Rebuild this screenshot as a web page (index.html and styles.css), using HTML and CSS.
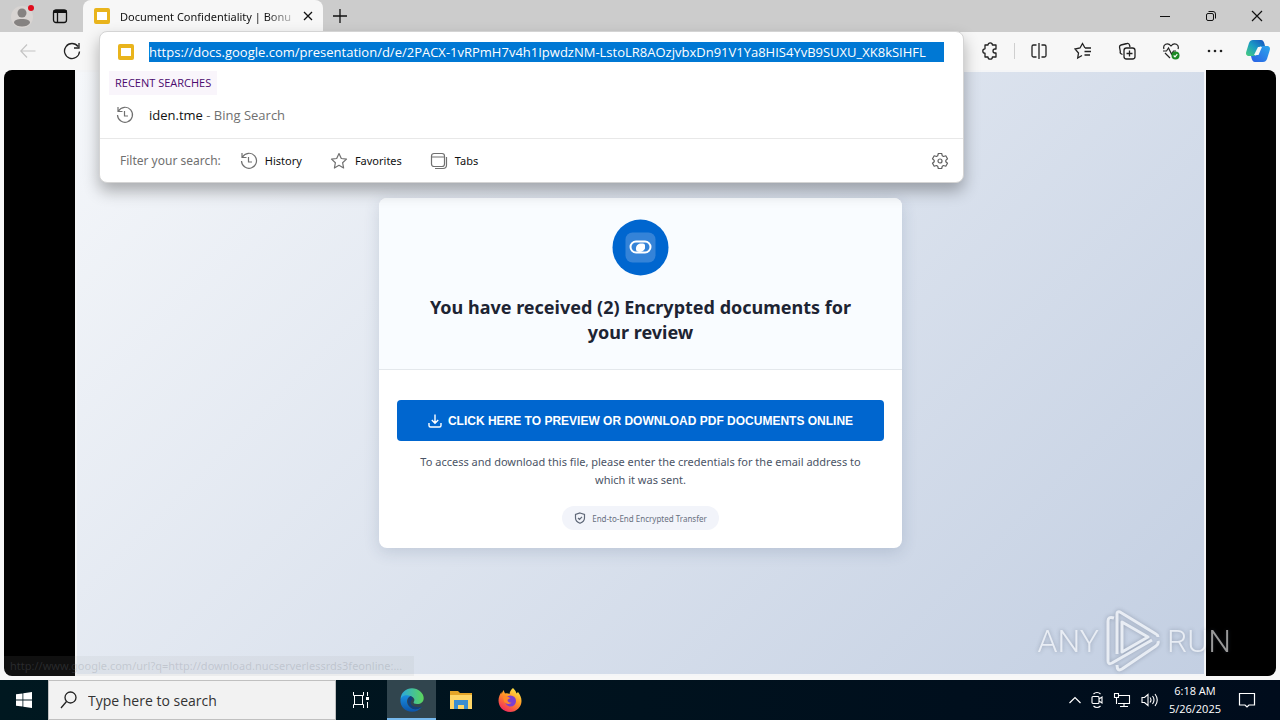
FILE: index.html
```html
<!DOCTYPE html>
<html lang="en">
<head>
    <meta charset="UTF-8">
    <meta name="viewport" content="width=device-width, initial-scale=1.0">
    <title>Document Confidentiality | Bonu</title>
    <link rel="stylesheet" href="styles.css">
</head>
<body>
    <header class="titlebar">
        <button class="profile" aria-label="Profile">
            <svg width="24" height="24" viewBox="0 0 24 24"><circle cx="12" cy="13" r="11" fill="#d8d4d2"/><circle cx="12" cy="9" r="4.500" fill="#858281"/><path d="M4 19c0-3 3-4 8-4s8 1 8 4c-1.500 2.500-4.500 3.500-8 3.500S5.500 21.500 4 19z" fill="#858281"/><circle cx="21" cy="4" r="3" fill="#e00b1c"/></svg>
        </button>
        <button class="workspaces" aria-label="Tab actions">
            <svg width="16" height="16" viewBox="0 0 16 16" fill="none" stroke="#111" stroke-width="1.300"><rect x="1.500" y="2" width="13" height="12.500" rx="2.500"/><path d="M1.500 3.500h13" stroke-width="3"/><path d="M5.500 5v9"/></svg>
        </button>
        <div class="tab">
            <svg class="slides-icon" width="16" height="16" viewBox="0 0 16 16"><rect width="16" height="16" rx="2" fill="#e9b41c"/><rect x="3" y="4" width="10" height="8" fill="#fff"/></svg>
            <span class="tab-title">Document Confidentiality | Bonu</span>
            <button class="tab-close" aria-label="Close tab">
                <svg width="10" height="10" viewBox="0 0 10 10" stroke="#111" stroke-width="1.300"><path d="M1 1l8 8M9 1l-8 8"/></svg>
            </button>
        </div>
        <button class="new-tab" aria-label="New tab">
            <svg width="14" height="14" viewBox="0 0 14 14" stroke="#111" stroke-width="1.300"><path d="M7 0v14M0 7h14"/></svg>
        </button>
        <div class="window-buttons">
            <button aria-label="Minimize"><svg width="12" height="12" viewBox="0 0 12 12" stroke="#111"><path d="M1 6.500h10"/></svg></button>
            <button aria-label="Restore"><svg width="12" height="12" viewBox="0 0 12 12" fill="none" stroke="#111"><rect x="1.500" y="3.500" width="7" height="7" rx="1.500"/><path d="M3.500 1.500h4.500a2.500 2.500 0 0 1 2.500 2.500v4.500"/></svg></button>
            <button aria-label="Close"><svg width="12" height="12" viewBox="0 0 12 12" stroke="#111" stroke-width="1.200"><path d="M1 1l10 10M11 1L1 11"/></svg></button>
        </div>
    </header>

    <nav class="toolbar">
        <button aria-label="Back"><svg width="16" height="16" viewBox="0 0 16 16" fill="none" stroke="#c4c4c4" stroke-width="1.200"><path d="M15.500 8H1M7 1.500L.8 8 7 14.500"/></svg></button>
        <button aria-label="Refresh"><svg width="18" height="18" viewBox="0 0 18 18" fill="none" stroke="#222" stroke-width="1.300"><path d="M16.500 9.500A7.500 7.500 0 1 1 15 4.500M16 1v5h-5"/></svg></button>
        <div class="toolbar-right">
            <button aria-label="Extensions"><svg width="18" height="18" viewBox="0 0 18 18" fill="none" stroke="#222" stroke-width="1.300" stroke-linejoin="round"><path d="M4 3h3a2.200 2.200 0 0 1 4.400 0H15v4h-1a2 2 0 0 0 0 4h1v4h-3.600a2.200 2.200 0 0 1-4.400 0H4v-3.800a2.200 2.200 0 0 1 0-4.400z"/></svg></button>
            <span class="separator"></span>
            <button aria-label="Split screen"><svg width="18" height="18" viewBox="0 0 18 18" fill="none" stroke="#222" stroke-width="1.300"><path d="M6.500 3H3.500A1.500 1.500 0 0 0 2 4.500v9A1.500 1.500 0 0 0 3.500 15h3M11.500 3h3A1.500 1.500 0 0 1 16 4.500v9a1.500 1.500 0 0 1-1.500 1.500h-3M9 1v16"/></svg></button>
            <button aria-label="Favorites"><svg width="18" height="18" viewBox="0 0 18 18" fill="none" stroke="#222" stroke-width="1.300"><path d="M11 6L8.500 1.500 6 6 1 7l3.500 4-.8 5L8 13.500M11 6h6M10.500 9.500H17M10.500 13H16"/></svg></button>
            <button aria-label="Collections"><svg width="18" height="18" viewBox="0 0 18 18" fill="none" stroke="#222" stroke-width="1.300"><path d="M4.500 12.500l-1-.5a2 2 0 0 1-1.200-2.500L1.500 5A2 2 0 0 1 3 3l6-1.500A2 2 0 0 1 11.500 3l.5 2"/><rect x="6" y="6" width="11" height="11" rx="2.500"/><path d="M11.500 8.500v6M8.500 11.500h6"/></svg></button>
            <button aria-label="Browser essentials"><svg width="18" height="18" viewBox="0 0 18 18" fill="none" stroke="#222" stroke-width="1.200"><path d="M2 7C.5 3 5.500-.5 9 4c3.500-4.500 8.500-1 7 3M1 9h3.500L6.500 6l3 6 2-3H14M3 11l5 5"/><circle cx="13.500" cy="13.500" r="4" fill="#1c8a24" stroke="none"/><path d="M11.700 13.500l1.300 1.300 2.300-2.600" stroke="#fff"/></svg></button>
            <button aria-label="Settings and more"><svg width="18" height="18" viewBox="0 0 18 18" fill="#222"><circle cx="3" cy="9" r="1.300"/><circle cx="9" cy="9" r="1.300"/><circle cx="15" cy="9" r="1.300"/></svg></button>
            <button aria-label="Copilot"><svg width="26" height="24" viewBox="0 0 26 24">
                <defs>
                    <linearGradient id="cop-a" x1="0" y1="1" x2="1" y2="0"><stop offset="0" stop-color="#49ce7c"/><stop offset=".5" stop-color="#1a9cc4"/><stop offset="1" stop-color="#174ec0"/></linearGradient>
                    <linearGradient id="cop-b" x1="0" y1="1" x2="1" y2="0"><stop offset="0" stop-color="#2a5ee4"/><stop offset="1" stop-color="#2ba7ec"/></linearGradient>
                </defs>
                <path d="M8 1h8c2 0 3 2 3.500 4l.5 2h-3c-2 0-3 1-3.500 3l-2 5c-.5 1.500-1.500 2-3 2H4c-3 0-3.500-2.500-2.500-5L4 4c.8-2 2-3 4-3z" fill="url(#cop-a)"/>
                <path d="M18 23h-8c-2 0-3-2-3.500-4L6 17h3c2 0 3-1 3.500-3l2-5c.5-1.500 1.500-2 3-2H22c3 0 3.500 2.500 2.500 5L22 20c-.8 2-2 3-4 3z" fill="url(#cop-b)"/>
                <path d="M13 8h4l-3.500 8H9z" fill="#f7f7f7"/>
            </svg></button>
        </div>
    </nav>

    <main class="viewport">
        <div class="slide">
            <section class="card">
                <div class="card-header">
                    <div class="badge">
                        <svg width="57" height="57" viewBox="0 0 57 57"><circle cx="28.500" cy="28.500" r="28" fill="#0066cf"/><rect x="13.500" y="13.500" width="30" height="30" rx="7" fill="#3483d8"/><rect x="18.500" y="22.500" width="20" height="11" rx="5.500" fill="none" stroke="#fff" stroke-width="2"/><path d="M24.500 32c-1.500-3 0-7 4-7.500h2.500q2 0 2 2v3c-1.500 3-5 4.500-8.500 2.500z" fill="#fff"/></svg>
                    </div>
                    <h1>You have received (2) Encrypted documents for your review</h1>
                </div>
                <div class="card-body">
                    <button class="download">
                        <svg width="14" height="14" viewBox="0 0 14 14" fill="none" stroke="#fff" stroke-width="1.400"><path d="M1 9v2.500A1.500 1.500 0 0 0 2.500 13h9a1.500 1.500 0 0 0 1.500-1.500V9M7 .5V9M3.800 6L7 9.200 10.200 6"/></svg>
                        Click here to preview or download PDF documents online
                    </button>
                    <p class="note">To access and download this file, please enter the credentials for the email address to which it was sent.</p>
                    <div class="secure">
                        <svg width="12" height="12" viewBox="0 0 12 12" fill="none" stroke="#5f6878" stroke-width="1.200"><path d="M6 1l4.500 1.500V6c0 2.500-2 4.300-4.500 5.300C3.500 10.300 1.500 8.500 1.500 6V2.500zM4 6l1.500 1.500L8 4.800"/></svg>
                        End-to-End Encrypted Transfer
                    </div>
                </div>
            </section>
        </div>
        <div class="status-url">http://www.google.com/url?q=http://download.nucserverlessrds3feonline:...</div>
        <div class="watermark">
            <span>ANY</span>
            <svg width="54" height="62" viewBox="0 0 54 62" fill="none" stroke="#fff" stroke-width="3" stroke-linejoin="round"><path d="M11 44V4q0-3 3-2l36 22q2 1 2 3M16 12v30l26-15zM8 8q-6-2-6 3v40q0 4 4 2l40-23M11 55q0 7 5 4l34-23q3-2 2-5"/></svg>
            <span>RUN</span>
        </div>
    </main>

    <section class="omnibox">
        <div class="address">
            <svg class="slides-icon" width="16" height="16" viewBox="0 0 16 16"><rect width="16" height="16" rx="2" fill="#e9b41c"/><rect x="3" y="4" width="10" height="8" fill="#fff"/></svg>
            <input type="text" aria-label="Address" value="https://docs.google.com/presentation/d/e/2PACX-1vRPmH7v4h1IpwdzNM-LstoLR8AOzjvbxDn91V1Ya8HIS4YvB9SUXU_XK8kSIHFL">
        </div>
        <h2>RECENT SEARCHES</h2>
        <a class="suggestion" href="#">
            <svg width="18" height="18" viewBox="0 0 18 18" fill="none" stroke="#707070" stroke-width="1.200"><path d="M2.500 5A7.500 7.500 0 1 1 1.500 9M2 1v4.500h4.500M8.500 5v5H12"/></svg>
            <span>iden.tme <em>- Bing Search</em></span>
        </a>
        <div class="filters">
            <span class="filter-label">Filter your search:</span>
            <button>
                <svg width="18" height="18" viewBox="0 0 18 18" fill="none" stroke="#707070" stroke-width="1.200"><path d="M2.500 5A7.500 7.500 0 1 1 1.500 9M2 1v4.500h4.500M8.500 5v5H12"/></svg>
                History
            </button>
            <button>
                <svg width="18" height="18" viewBox="0 0 18 18" fill="none" stroke="#707070" stroke-width="1.200" stroke-linejoin="round"><path d="M9 1.500l2.300 5 5.200.6-3.900 3.600 1 5.300L9 13.300 4.400 16l1-5.300L1.500 7.100l5.200-.6z"/></svg>
                Favorites
            </button>
            <button>
                <svg width="18" height="18" viewBox="0 0 18 18" fill="none" stroke="#707070" stroke-width="1.200"><rect x="1.500" y="1.500" width="13" height="13" rx="2.500"/><path d="M1.500 5h13M5 16.500h8a3.500 3.500 0 0 0 3.500-3.500V5"/></svg>
                Tabs
            </button>
            <button class="settings" aria-label="Search settings">
                <svg width="18" height="18" viewBox="0 0 18 18" fill="none" stroke="#606060" stroke-width="1.200" stroke-linejoin="round"><path d="M7.300 1.500h3.400l.6 2.300 1.200.7 2.300-.7 1.700 3-1.700 1.600v1.300l1.700 1.500-1.700 3-2.300-.7-1.200.7-.6 2.300H7.300l-.6-2.300-1.200-.7-2.300.7-1.700-3 1.700-1.500V8.400L1.500 6.800l1.700-3 2.300.7 1.200-.7z"/><circle cx="9" cy="9" r="2"/></svg>
            </button>
        </div>
    </section>

    <footer class="taskbar">
        <button class="start" aria-label="Start">
            <svg width="16" height="16" viewBox="0 0 16 16" fill="#fff"><path d="M0 2.300L6.500 1.400v6.200H0zM7.300 1.300L16 0v7.600H7.300zM0 8.400h6.500v6.200L0 13.700zM7.300 8.400H16V16l-8.700-1.300z"/></svg>
        </button>
        <label class="search">
            <svg width="18" height="18" viewBox="0 0 18 18" fill="none" stroke="#222" stroke-width="1.300"><circle cx="10.500" cy="6.500" r="5.500"/><path d="M6.500 10.500L1 17"/></svg>
            <input type="text" placeholder="Type here to search">
        </label>
        <button class="task" aria-label="Task view">
            <svg width="16" height="16" viewBox="0 0 16 16" fill="none" stroke="#fff"><path d="M.5 0v3.500h10V0M.5 16v-3.500h10V16M1.500 3.500v9M9.500 3.500v9M14.500 0v4M14.500 10v6"/><path d="M13 6.500h3" stroke-width="3"/></svg>
        </button>
        <button class="task active" aria-label="Microsoft Edge">
            <svg width="24" height="24" viewBox="0 0 24 24">
                <defs>
                    <linearGradient id="edge-a" x1="0" y1="0" x2="1" y2="0"><stop offset="0" stop-color="#2aa7df"/><stop offset="1" stop-color="#5cd65a"/></linearGradient>
                    <linearGradient id="edge-b" x1="0" y1="0" x2="0" y2="1"><stop offset="0" stop-color="#1a8ee0"/><stop offset="1" stop-color="#0c54a8"/></linearGradient>
                </defs>
                <path d="M.5 11C1 4.500 6 .3 12 .3S23.700 5 23.700 10c0 4-3 6-6.500 6-3 0-4-1-3.500-2 1.500-2 .5-5-3-5.500C6 7.500 2 9 .5 11z" fill="url(#edge-a)"/>
                <path d="M.4 12C1 8 6 6 10.500 8c-3.500 1.500-4.500 6-2 9.500 3 4.500 9 5 13.500 1-2 3.500-6 5.300-10 5.300C5 23.800 0 18.500.4 12z" fill="url(#edge-b)"/>
                <path d="M10.500 8c-4 3-3 9 1 12 3 2 7 1.500 10.500-1.500-5 1.500-11 .5-11.500-4 0-2 1.500-2 2-3.500s-.5-2.500-2-3z" fill="#123f7c"/>
            </svg>
        </button>
        <button class="task" aria-label="File Explorer">
            <svg width="22" height="20" viewBox="0 0 22 20"><path d="M0 1h8l2 2h12v16H0z" fill="#e5a528"/><path d="M0 5h22v14H0z" fill="#ffd667"/><path d="M4 10h14v9h-4v-4H8v4H4z" fill="#3b8dd0"/></svg>
        </button>
        <button class="task" aria-label="Firefox">
            <svg width="24" height="24" viewBox="0 0 24 24">
                <defs><linearGradient id="fox" x1=".8" y1="0" x2=".2" y2="1"><stop offset="0" stop-color="#fff04a"/><stop offset=".45" stop-color="#ff9425"/><stop offset="1" stop-color="#f01f62"/></linearGradient></defs>
                <path d="M15 0c2 2 3 3.500 3.500 5.500L20 4c2 2.500 3.500 5.500 3.500 9 0 6-5 11-11.500 11S.5 19 .5 12.500C.5 9 2 6 3.500 4v2l2-4L7 5.500c2-.5 3.500 0 4.500.5.300-2.500 1.500-4.500 3.500-6z" fill="url(#fox)"/>
                <circle cx="12.500" cy="13" r="5.500" fill="#7b3fd0"/><path d="M5 9c3-2 6 0 7.500 1.500-2 0-2 1-3 1.500 0 2 2 3 4 2.500-1 2-6 2-7.500-1z" fill="#ff8a28"/>
            </svg>
        </button>
        <div class="tray">
            <svg width="12" height="18" viewBox="0 0 12 18" fill="none" stroke="#fff" stroke-width="1.200"><path d="M.5 12L6 6.500l5.500 5.500"/></svg>
            <svg width="12" height="18" viewBox="0 0 12 18" fill="none" stroke="#fff" stroke-width="1.100"><rect x="1" y="5.500" width="7" height="7" rx="1"/><path d="M8 8l3-2v6l-3-2M2.500 3C4.500 1 7.500 1 9.500 3M2.500 15c2 2 5 2 7 0"/></svg>
            <svg width="18" height="18" viewBox="0 0 18 18" fill="none" stroke="#fff" stroke-width="1.100"><path d="M6 4.500h10.500v8H5M11 12.500V15M7 15.500h8M1.500 2.500h4v4h-4zM3.500 6.500V13"/></svg>
            <svg width="18" height="18" viewBox="0 0 18 18" fill="none" stroke="#fff" stroke-width="1.100"><path d="M1 6.500h2.500L7 3.500v11l-3.500-3H1zM9 6.500q2 2.500 0 5M11.500 5q3 4 0 8M14 3q4.500 6 0 12"/></svg>
            <div class="clock"><span>6:18 AM</span><span>5/26/2025</span></div>
            <svg width="18" height="18" viewBox="0 0 18 18" fill="none" stroke="#fff" stroke-width="1.200"><path d="M1.500 2.500h15v11.500H11l-2 2-2-2H1.500z"/></svg>
        </div>
    </footer>
</body>
</html>
```
FILE: styles.css
```css
* {
    box-sizing: border-box;
}

body {
    margin: 0;
    height: 100vh;
    display: flex;
    flex-direction: column;
    position: relative;
    overflow: hidden;
    background: #f7f7f7;
    color: #111;
    font-family: "Noto Sans", "Open Sans", sans-serif;
    font-size: 11px;
}

button {
    display: flex;
    align-items: center;
    justify-content: center;
    padding: 0;
    border: 0;
    background: none;
    color: inherit;
    font: inherit;
}

svg {
    display: block;
    flex-shrink: 0;
}

/* window title bar */
.titlebar {
    display: flex;
    height: 32px;
    flex-shrink: 0;
    background: #cccccc;
}

.profile {
    width: 44px;
}

.workspaces {
    width: 32px;
}

.tab {
    display: flex;
    align-items: center;
    width: 240px;
    margin-left: 7px;
    padding: 0 9px 0 11px;
    gap: 10px;
    border-radius: 8px 8px 0 0;
    background: #f7f7f7;
}

.tab-title {
    flex: 1;
    white-space: nowrap;
    mask-image: linear-gradient(to right, #000 85%, transparent 105%);
}

.tab-close {
    width: 12px;
}

.new-tab {
    width: 34px;
}

.window-buttons {
    display: flex;
    margin-left: auto;
}

.window-buttons button {
    width: 46px;
}

/* browser toolbar */
.toolbar {
    display: flex;
    align-items: center;
    height: 38px;
    flex-shrink: 0;
    padding-left: 6px;
}

.toolbar button {
    width: 44px;
    height: 32px;
}

.toolbar-right {
    display: flex;
    align-items: center;
    margin-left: auto;
    padding-right: 1px;
}

.toolbar-right button:last-child {
    width: 42px;
}

.separator {
    width: 1px;
    height: 16px;
    margin: 0 2px;
    background: #cfcfcf;
}

/* page */
.viewport {
    position: relative;
    flex: 1;
    display: flex;
    min-height: 0;
    margin: 0 4px 4px;
    padding: 0 70px 0 71px;
    border-radius: 8px;
    background: #000;
    overflow: hidden;
}

.slide {
    flex: 1;
    display: flex;
    align-items: center;
    justify-content: center;
    border: 2px solid #f4f5f7;
    background: linear-gradient(135deg, #f5f7fa 0%, #c3cfe2 100%);
}

.card {
    width: 523px;
    border-radius: 8px;
    background: #fff;
    box-shadow: 0 4px 16px rgba(40, 60, 100, 0.16);
    text-align: center;
    overflow: hidden;
}

.card-header {
    padding: 21px 32px 24px;
    border-bottom: 1px solid #e4e8ec;
    background: #f9fcff;
}

.badge {
    display: flex;
    justify-content: center;
    margin-bottom: 19px;
}

.card h1 {
    margin: 0;
    color: #1d2433;
    font-size: 18px;
    line-height: 25px;
}

.card-body {
    display: flex;
    flex-direction: column;
    align-items: center;
    padding: 30px 18px 18px;
}

.download {
    width: 100%;
    height: 41px;
    gap: 6px;
    border-radius: 4px;
    background: #0066cf;
    color: #fff;
    font-family: "Liberation Sans", Arial, sans-serif;
    font-size: 12px;
    font-weight: bold;
    text-transform: uppercase;
}

.note {
    margin: 12px 16px 17px;
    color: #4b5466;
    line-height: 18px;
}

.secure {
    display: flex;
    align-items: center;
    gap: 6px;
    height: 24px;
    padding: 0 12px;
    border-radius: 12px;
    background: #f2f4fa;
    color: #687080;
    font-size: 8px;
}

.status-url {
    position: absolute;
    left: 0;
    bottom: 0;
    padding: 0 12px 0 6px;
    background: rgba(160, 160, 160, 0.1);
    color: rgba(120, 125, 135, 0.25);
    line-height: 20px;
}

.watermark {
    position: absolute;
    right: 45px;
    bottom: 4px;
    display: flex;
    align-items: center;
    gap: 7px;
    color: #fff;
    font-family: Roboto, "Liberation Sans", sans-serif;
    font-size: 32px;
    font-weight: 300;
    opacity: 0.6;
    filter: drop-shadow(0 0 2px rgba(60, 70, 90, 0.6));
}

/* address drop-down */
.omnibox {
    position: absolute;
    top: 31px;
    left: 99px;
    right: 316px;
    border: 1px solid #d4d4d4;
    border-radius: 8px;
    background: #fff;
    box-shadow: 0 8px 16px rgba(0, 0, 0, 0.3);
}

.address {
    display: flex;
    align-items: center;
    gap: 15px;
    height: 39px;
    padding: 0 19px 0 18px;
}

.address input {
    flex: 1;
    min-width: 0;
    height: 20px;
    padding: 0;
    border: 0;
    background: #0078d4;
    color: #fff;
    font-family: "Open Sans", sans-serif;
    font-size: 13px;
}

.omnibox h2 {
    width: max-content;
    margin: 0 0 0 9px;
    padding: 0 6px;
    background: #f9f5fb;
    color: #4b0a6e;
    font-family: "Open Sans", sans-serif;
    font-size: 11px;
    font-weight: normal;
    line-height: 24px;
}

.suggestion {
    display: flex;
    align-items: center;
    gap: 15px;
    height: 40px;
    padding-left: 16px;
    color: #111;
    font-family: "Open Sans", sans-serif;
    font-size: 13px;
    text-decoration: none;
}

.suggestion em {
    color: #707070;
    font-style: normal;
}

.filters {
    display: flex;
    align-items: center;
    height: 44px;
    margin-top: 3px;
    padding: 0 14px 0 20px;
    border-top: 1px solid #e8e8e8;
}

.filter-label {
    margin-right: 19px;
    color: #707070;
    font-size: 12px;
}

.filters button {
    gap: 7px;
    margin-right: 28px;
}

.filters .settings {
    margin: 0 0 0 auto;
}

/* taskbar */
.taskbar {
    display: flex;
    height: 40px;
    flex-shrink: 0;
    background: linear-gradient(to right, #001820, #000c1c);
    color: #fff;
}

.start {
    width: 48px;
}

.search {
    display: flex;
    align-items: center;
    gap: 10px;
    width: 288px;
    padding-left: 11px;
    border: 1px solid #c0c0c0;
    background: #f2f2f2;
}

.search input {
    width: 200px;
    padding: 0;
    border: 0;
    background: none;
    font-family: "Open Sans", sans-serif;
    font-size: 14px;
}

.search input::placeholder {
    color: #333;
}

.task {
    width: 49px;
}

.task.active {
    margin-left: 2px;
    border-top: 2px solid transparent;
    border-bottom: 2px solid #76b9ed;
    background: #31454e;
}

.tray {
    display: flex;
    align-items: center;
    gap: 10px;
    margin-left: auto;
    padding-right: 24px;
}

.clock {
    display: flex;
    flex-direction: column;
    align-items: center;
    margin-right: 7px;
    font-family: "Open Sans", sans-serif;
    line-height: 18px;
}
```
